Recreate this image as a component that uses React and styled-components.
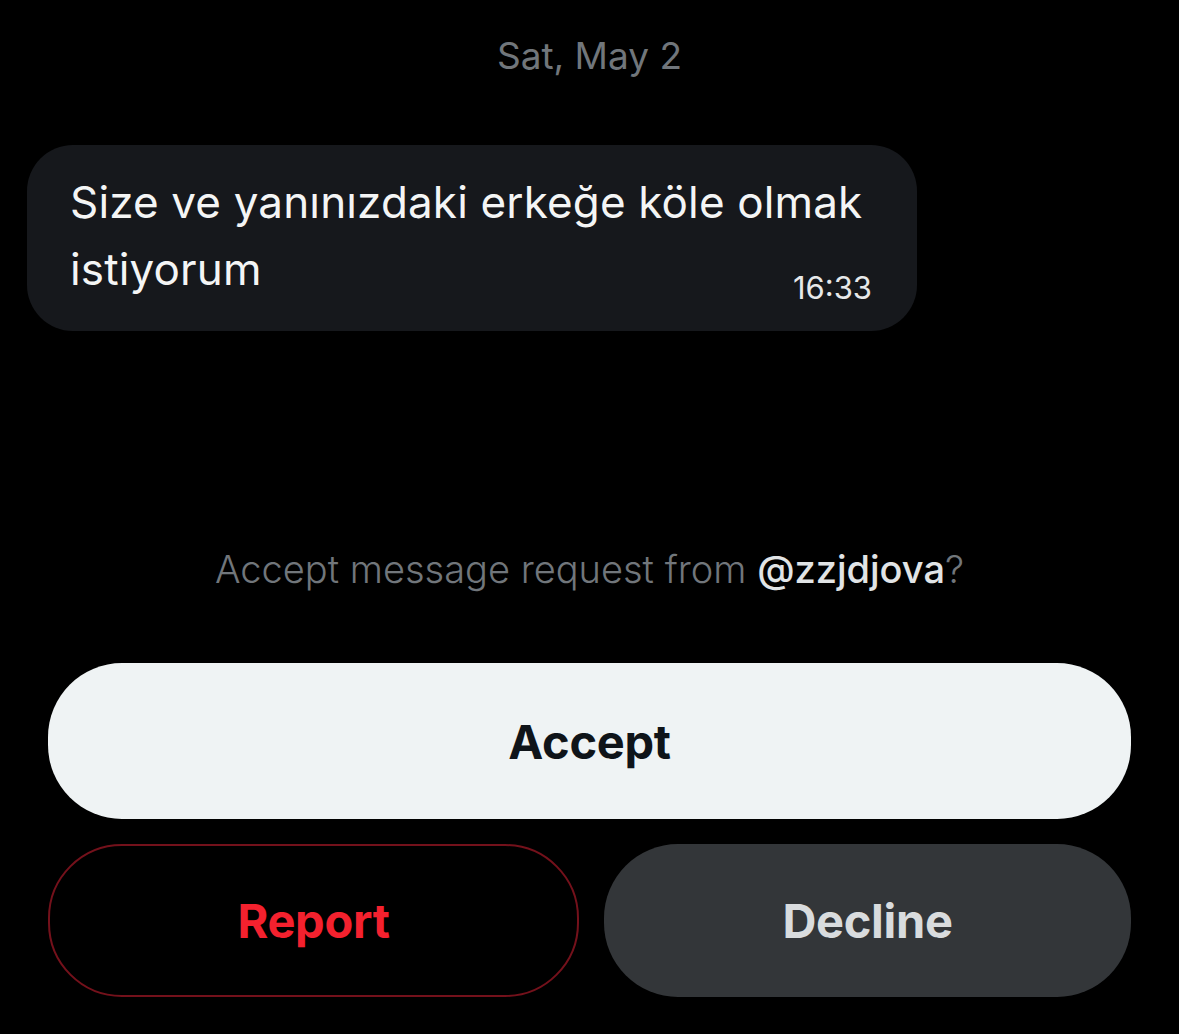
import React from "react";
import styled, { createGlobalStyle } from "styled-components";

const Global = createGlobalStyle`
  html, body { margin: 0; padding: 0; background: #000; }
  body { font-family: Inter, "Noto Sans", "Liberation Sans", sans-serif; -webkit-font-smoothing: antialiased; }
  * { box-sizing: border-box; }
`;

const Page = styled.div`
  width: 1179px;
  height: 1034px;
  background: #000;
  display: flex;
  flex-direction: column;
  overflow: hidden;
`;

const DateLabel = styled.div`
  margin-top: 31px;
  height: 50px;
  line-height: 50px;
  text-align: center;
  color: #71767b;
  font-size: 37px;
  font-weight: 400;
`;

const Bubble = styled.div`
  margin: 64px 0 0 27px;
  width: 890px;
  min-height: 186px;
  background: #16181c;
  border-radius: 46px;
  padding: 24px 45px 28px 43px;
  position: relative;
`;

const MessageText = styled.div`
  font-size: 44px;
  line-height: 67px;
  color: #f4f5f5;
  letter-spacing: 0.15px;
`;

const Time = styled.span`
  position: absolute;
  right: 45px;
  bottom: 25px;
  font-size: 31px;
  line-height: 36px;
  color: #e7e9ea;
`;

const Prompt = styled.div`
  margin-top: 213px;
  text-align: center;
  font-size: 38px;
  line-height: 50px;
  font-weight: 300;
  color: #71767b;
`;

const Handle = styled.span`
  color: #e1e4e6;
  font-weight: 500;
`;

const Actions = styled.div`
  margin: 69px 48px 0 48px;
  display: flex;
  flex-direction: column;
  gap: 25px;
`;

const Row = styled.div`
  display: flex;
  gap: 25px;
`;

const Button = styled.button`
  flex: ${(p) => (p.$full ? "none" : "1 1 0")};
  width: ${(p) => (p.$full ? "100%" : "auto")};
  height: ${(p) => p.$h}px;
  border-radius: 74px;
  border: ${(p) => (p.$variant === "report" ? "2.5px solid #74111b" : "none")};
  background: ${(p) =>
    p.$variant === "accept" ? "#eff3f4" : p.$variant === "decline" ? "#333639" : "transparent"};
  color: ${(p) =>
    p.$variant === "accept" ? "#0f1419" : p.$variant === "decline" ? "#d9dcde" : "#f4212e"};
  font-family: inherit;
  font-size: 47px;
  font-weight: 700;
  letter-spacing: -0.3px;
  display: flex;
  align-items: center;
  justify-content: center;
  padding: 0;
  cursor: pointer;
`;

export default function App() {
  return (
    <>
      <Global />
      <Page>
        <DateLabel>Sat, May 2</DateLabel>
        <Bubble>
          <MessageText>
            Size ve yanınızdaki erkeğe köle olmak
            <br />
            istiyorum
          </MessageText>
          <Time>16:33</Time>
        </Bubble>
        <Prompt>
          Accept message request from <Handle>@zzjdjova</Handle>?
        </Prompt>
        <Actions>
          <Button $variant="accept" $full $h={156}>Accept</Button>
          <Row>
            <Button $variant="report" $h={153}>Report</Button>
            <Button $variant="decline" $h={153}>Decline</Button>
          </Row>
        </Actions>
      </Page>
    </>
  );
}
